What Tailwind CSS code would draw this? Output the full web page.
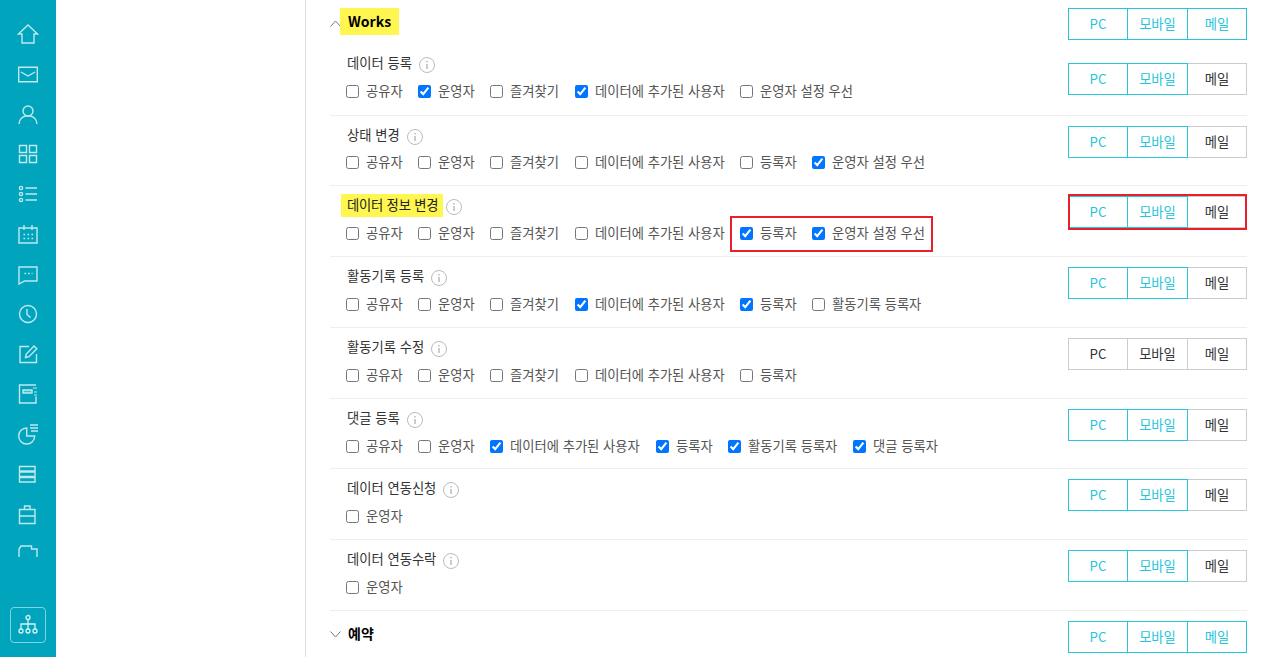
<!DOCTYPE html>
<html lang="ko">
<head>
<meta charset="utf-8">
<script src="https://cdn.jsdelivr.net/npm/@tailwindcss/browser@4"></script>
</head>
<body class="h-[657px] overflow-hidden bg-white font-['Noto_Sans_CJK_KR','Noto_Sans',sans-serif] text-[13.3px] text-[#555]">
<div class="flex h-[657px]">
  <aside class="flex w-[56px] shrink-0 flex-col items-center bg-[#00a5bd] pt-[22px] pb-[14px]">
    <nav class="flex h-[535px] flex-col items-center overflow-hidden text-[#bfe9ef]">
      <span class="block h-[40px] shrink-0"><svg width="24" height="24" viewBox="0 0 24 24" fill="none" stroke="currentColor" stroke-width="1.4"><path d="M2.500 12 12 3l9.500 9H18v9H6v-9z"/></svg></span>
      <span class="block h-[40px] shrink-0"><svg width="24" height="24" viewBox="0 0 24 24" fill="none" stroke="currentColor" stroke-width="1.4"><path d="M2.700 5.200h18.600v14.600H2.700zM5 10l7 4 7-4"/></svg></span>
      <span class="block h-[40px] shrink-0"><svg width="24" height="24" viewBox="0 0 24 24" fill="none" stroke="currentColor" stroke-width="1.4"><circle cx="12" cy="9" r="5"/><path d="M3 22c0-5 4-8.200 9-8.200s9 3.200 9 8.200"/></svg></span>
      <span class="block h-[40px] shrink-0"><svg width="24" height="24" viewBox="0 0 24 24" fill="none" stroke="currentColor" stroke-width="1.4"><path d="M3.500 3.500h7v7h-7zM13.500 3.500h7v7h-7zM3.500 13.500h7v7h-7zM13.500 13.500h7v7h-7z"/></svg></span>
      <span class="block h-[40px] shrink-0"><svg width="24" height="24" viewBox="0 0 24 24" fill="none" stroke="currentColor" stroke-width="1.4"><circle cx="5" cy="6" r="1.600"/><circle cx="5" cy="12" r="1.600"/><circle cx="5" cy="18" r="1.600"/><path d="M9.500 6H21M9.500 12H21M9.500 18H21"/></svg></span>
      <span class="block h-[40px] shrink-0"><svg width="24" height="24" viewBox="0 0 24 24" fill="none" stroke="currentColor" stroke-width="1.4"><path d="M3 6h18v15H3zM8 3v5M16 3v5"/><path stroke-width="1.600" stroke-dasharray="1.600 2.400" d="M7.500 12.500h10M7.500 16.500h10"/></svg></span>
      <span class="block h-[40px] shrink-0"><svg width="24" height="24" viewBox="0 0 24 24" fill="none" stroke="currentColor" stroke-width="1.4"><path d="M3 5h18v14H8.500L3 22z"/><path stroke-width="1.600" stroke-dasharray="1.600 2" d="M8.500 11.500h8"/></svg></span>
      <span class="block h-[40px] shrink-0"><svg width="24" height="24" viewBox="0 0 24 24" fill="none" stroke="currentColor" stroke-width="1.4"><circle cx="12" cy="12" r="8.500"/><path d="M11 7v5.500l3.500 3"/></svg></span>
      <span class="block h-[40px] shrink-0"><svg width="24" height="24" viewBox="0 0 24 24" fill="none" stroke="currentColor" stroke-width="1.4"><path d="M13 4.500H4v16h16.500V12M9.500 15.500l.8-3.500L18 4l2.800 2.700-7.800 8z"/></svg></span>
      <span class="block h-[40px] shrink-0"><svg width="24" height="24" viewBox="0 0 24 24" fill="none" stroke="currentColor" stroke-width="1.4"><path d="M20 3H3.500v18H20v-6.500"/><path d="M7 8h9v3H7z" fill="currentColor" fill-opacity=".35"/><path d="M17 6h4M18 10h3M18 13h3" stroke-width="1.200"/></svg></span>
      <span class="block h-[40px] shrink-0"><svg width="24" height="24" viewBox="0 0 24 24" fill="none" stroke="currentColor" stroke-width="1.4"><path d="M10.700 6A8 8 0 1 0 18.700 14H10.700z"/><path d="M14 3h8M14 6h8M15 9h7" stroke-width="1.500"/></svg></span>
      <span class="block h-[40px] shrink-0"><svg width="24" height="24" viewBox="0 0 24 24" fill="none" stroke="currentColor" stroke-width="1.4"><path d="M3.500 4.500h15.500v4.500H3.500zM3.500 10h15.500v4.500H3.500zM3.500 15.500h15.500v4.500H3.500z"/></svg></span>
      <span class="block h-[40px] shrink-0"><svg width="24" height="24" viewBox="0 0 24 24" fill="none" stroke="currentColor" stroke-width="1.4"><path d="M3.500 7.500h15.500v14H3.500zM3.500 14h15.500M8.500 7.500V4h5.500v3.500"/></svg></span>
      <span class="block h-[40px] shrink-0 -mt-[2px]"><svg width="24" height="24" viewBox="0 0 24 24" fill="none" stroke="currentColor" stroke-width="1.4"><path d="M3 17V9l2-3h10.500v3h5.500v8"/></svg></span>
    </nav>
    <button class="mt-auto flex h-[36px] w-[36px] items-center justify-center rounded-[4px] border border-[#7fd2de] text-[#d6f2f6]">
      <svg width="24" height="24" viewBox="0 0 24 24" fill="none" stroke="currentColor" stroke-width="1.3"><circle cx="12" cy="4.500" r="2"/><circle cx="5" cy="18" r="2"/><circle cx="12" cy="18" r="2"/><circle cx="19" cy="18" r="2"/><path d="M12 6.500V16M5 16v-5h14v5"/></svg>
    </button>
  </aside>
  <div class="w-[250px] shrink-0 border-r border-[#e0e0e0]"></div>
  <main class="ml-[24px] w-[917px] shrink-0">
    <section class="flex h-[53px] justify-between pt-[8px]">
      <div class="flex items-start">
        <svg class="mt-[12px]" width="11" height="7" viewBox="0 0 11 7" fill="none" stroke="#777"><path d="M.5 6.500 5.500 1l5 5.500"/></svg>
        <strong class="bg-[#fff750] px-[8px] h-[27px] ml-[-1px] text-[14px] leading-[27px] font-bold text-black">Works</strong>
      </div>
      <div class="flex h-[32px]"><span class="z-10 flex w-[60px] items-center justify-center border border-[#26c6da] text-[#26c6da]">PC</span><span class="z-10 -ml-px flex w-[61px] items-center justify-center border border-[#26c6da] text-[#26c6da]">모바일</span><span class="-ml-px flex w-[60px] items-center justify-center border border-[#26c6da] text-[#26c6da]">메일</span></div>
    </section>

    <section class="flex h-[63px] justify-between border-b border-[#eee] pt-[10px] pl-[17px]">
      <div class="-mt-[10px]">
        <div class="flex h-[20px] items-center text-[#333]">데이터 등록<svg class="ml-[7px] mt-[3px]" width="16" height="16" viewBox="0 0 16 16" fill="none" stroke="#bbb"><circle cx="8" cy="8" r="7.500"/><path d="M8 7v5M8 4v1.500" stroke="#999"/></svg></div>
        <div class="mt-[9px] flex h-[18px] items-center -ml-px">
          <label class="flex w-[72px] items-center gap-[7px]"><input type="checkbox">공유자</label>
          <label class="flex w-[72px] items-center gap-[7px]"><input type="checkbox" checked>운영자</label>
          <label class="flex w-[85px] items-center gap-[7px]"><input type="checkbox">즐겨찾기</label>
          <label class="flex w-[165px] items-center gap-[7px]"><input type="checkbox" checked>데이터에 추가된 사용자</label>
          <label class="flex items-center gap-[7px]"><input type="checkbox">운영자 설정 우선</label>
        </div>
      </div>
      <div class="flex h-[32px]"><span class="z-10 flex w-[60px] items-center justify-center border border-[#26c6da] text-[#26c6da]">PC</span><span class="z-10 -ml-px flex w-[61px] items-center justify-center border border-[#26c6da] text-[#26c6da]">모바일</span><span class="-ml-px flex w-[60px] items-center justify-center border border-[#ccc] text-[#333]">메일</span></div>
    </section>

    <section class="flex h-[70px] justify-between border-b border-[#eee] pt-[10px] pl-[17px]">
      <div class="-mt-px">
        <div class="flex h-[20px] items-center text-[#333]">상태 변경<svg class="ml-[7px] mt-[3px]" width="16" height="16" viewBox="0 0 16 16" fill="none" stroke="#bbb"><circle cx="8" cy="8" r="7.500"/><path d="M8 7v5M8 4v1.500" stroke="#999"/></svg></div>
        <div class="mt-[8px] flex h-[18px] items-center -ml-px">
          <label class="flex w-[72px] items-center gap-[7px]"><input type="checkbox">공유자</label>
          <label class="flex w-[72px] items-center gap-[7px]"><input type="checkbox">운영자</label>
          <label class="flex w-[85px] items-center gap-[7px]"><input type="checkbox">즐겨찾기</label>
          <label class="flex w-[165px] items-center gap-[7px]"><input type="checkbox">데이터에 추가된 사용자</label>
          <label class="flex w-[72px] items-center gap-[7px]"><input type="checkbox">등록자</label>
          <label class="flex items-center gap-[7px]"><input type="checkbox" checked>운영자 설정 우선</label>
        </div>
      </div>
      <div class="flex h-[32px]"><span class="z-10 flex w-[60px] items-center justify-center border border-[#26c6da] text-[#26c6da]">PC</span><span class="z-10 -ml-px flex w-[61px] items-center justify-center border border-[#26c6da] text-[#26c6da]">모바일</span><span class="-ml-px flex w-[60px] items-center justify-center border border-[#ccc] text-[#333]">메일</span></div>
    </section>

    <section class="flex h-[71px] justify-between border-b border-[#eee] pt-[10px] pl-[17px]">
      <div class="-mt-px">
        <div class="flex h-[20px] items-center text-[#333]"><span class="-ml-[6px] flex h-[23px] items-center bg-[#fff750] pl-[6px] pr-[5px] tracking-[-0.2px] text-[#222]">데이터 정보 변경</span><svg class="ml-[3px] mt-[3px]" width="16" height="16" viewBox="0 0 16 16" fill="none" stroke="#bbb"><circle cx="8" cy="8" r="7.500"/><path d="M8 7v5M8 4v1.500" stroke="#999"/></svg></div>
        <div class="mt-[9px] flex h-[18px] items-center -ml-px">
          <label class="flex w-[72px] items-center gap-[7px]"><input type="checkbox">공유자</label>
          <label class="flex w-[72px] items-center gap-[7px]"><input type="checkbox">운영자</label>
          <label class="flex w-[85px] items-center gap-[7px]"><input type="checkbox">즐겨찾기</label>
          <label class="flex w-[165px] items-center gap-[7px]"><input type="checkbox">데이터에 추가된 사용자</label>
          <div class="relative flex items-center">
            <span class="absolute -left-[10px] -right-[8px] -top-[7px] -bottom-[9px] border-2 border-[#e8202a]"></span>
            <label class="flex w-[72px] items-center gap-[7px]"><input type="checkbox" checked>등록자</label>
            <label class="flex items-center gap-[7px]"><input type="checkbox" checked>운영자 설정 우선</label>
          </div>
        </div>
      </div>
      <div class="relative flex h-[32px]"><span class="z-10 flex w-[60px] items-center justify-center border border-[#26c6da] text-[#26c6da]">PC</span><span class="z-10 -ml-px flex w-[61px] items-center justify-center border border-[#26c6da] text-[#26c6da]">모바일</span><span class="-ml-px flex w-[60px] items-center justify-center border border-[#ccc] text-[#333]">메일</span><span class="absolute -inset-y-[2px] inset-x-0 z-20 border-2 border-[#e8202a]"></span></div>
    </section>

    <section class="flex h-[71px] justify-between border-b border-[#eee] pt-[10px] pl-[17px]">
      <div class="-mt-px">
        <div class="flex h-[20px] items-center text-[#333]">활동기록 등록<svg class="ml-[7px] mt-[3px]" width="16" height="16" viewBox="0 0 16 16" fill="none" stroke="#bbb"><circle cx="8" cy="8" r="7.500"/><path d="M8 7v5M8 4v1.500" stroke="#999"/></svg></div>
        <div class="mt-[9px] flex h-[18px] items-center -ml-px">
          <label class="flex w-[72px] items-center gap-[7px]"><input type="checkbox">공유자</label>
          <label class="flex w-[72px] items-center gap-[7px]"><input type="checkbox">운영자</label>
          <label class="flex w-[85px] items-center gap-[7px]"><input type="checkbox">즐겨찾기</label>
          <label class="flex w-[165px] items-center gap-[7px]"><input type="checkbox" checked>데이터에 추가된 사용자</label>
          <label class="flex w-[72px] items-center gap-[7px]"><input type="checkbox" checked>등록자</label>
          <label class="flex items-center gap-[7px]"><input type="checkbox">활동기록 등록자</label>
        </div>
      </div>
      <div class="flex h-[32px]"><span class="z-10 flex w-[60px] items-center justify-center border border-[#26c6da] text-[#26c6da]">PC</span><span class="z-10 -ml-px flex w-[61px] items-center justify-center border border-[#26c6da] text-[#26c6da]">모바일</span><span class="-ml-px flex w-[60px] items-center justify-center border border-[#ccc] text-[#333]">메일</span></div>
    </section>

    <section class="flex h-[71px] justify-between border-b border-[#eee] pt-[10px] pl-[17px]">
      <div class="-mt-px">
        <div class="flex h-[20px] items-center text-[#333]">활동기록 수정<svg class="ml-[7px] mt-[3px]" width="16" height="16" viewBox="0 0 16 16" fill="none" stroke="#bbb"><circle cx="8" cy="8" r="7.500"/><path d="M8 7v5M8 4v1.500" stroke="#999"/></svg></div>
        <div class="mt-[9px] flex h-[18px] items-center -ml-px">
          <label class="flex w-[72px] items-center gap-[7px]"><input type="checkbox">공유자</label>
          <label class="flex w-[72px] items-center gap-[7px]"><input type="checkbox">운영자</label>
          <label class="flex w-[85px] items-center gap-[7px]"><input type="checkbox">즐겨찾기</label>
          <label class="flex w-[165px] items-center gap-[7px]"><input type="checkbox">데이터에 추가된 사용자</label>
          <label class="flex items-center gap-[7px]"><input type="checkbox">등록자</label>
        </div>
      </div>
      <div class="flex h-[32px]"><span class="flex w-[60px] items-center justify-center border border-[#ccc] text-[#333]">PC</span><span class="-ml-px flex w-[61px] items-center justify-center border border-[#ccc] text-[#333]">모바일</span><span class="-ml-px flex w-[60px] items-center justify-center border border-[#ccc] text-[#333]">메일</span></div>
    </section>

    <section class="flex h-[70px] justify-between border-b border-[#eee] pt-[10px] pl-[17px]">
      <div class="-mt-px">
        <div class="flex h-[20px] items-center text-[#333]">댓글 등록<svg class="ml-[7px] mt-[3px]" width="16" height="16" viewBox="0 0 16 16" fill="none" stroke="#bbb"><circle cx="8" cy="8" r="7.500"/><path d="M8 7v5M8 4v1.500" stroke="#999"/></svg></div>
        <div class="mt-[9px] flex h-[18px] items-center -ml-px">
          <label class="flex w-[72px] items-center gap-[7px]"><input type="checkbox">공유자</label>
          <label class="flex w-[72px] items-center gap-[7px]"><input type="checkbox">운영자</label>
          <label class="flex w-[166px] items-center gap-[7px]"><input type="checkbox" checked>데이터에 추가된 사용자</label>
          <label class="flex w-[72px] items-center gap-[7px]"><input type="checkbox" checked>등록자</label>
          <label class="flex w-[125px] items-center gap-[7px]"><input type="checkbox" checked>활동기록 등록자</label>
          <label class="flex items-center gap-[7px]"><input type="checkbox" checked>댓글 등록자</label>
        </div>
      </div>
      <div class="flex h-[32px]"><span class="z-10 flex w-[60px] items-center justify-center border border-[#26c6da] text-[#26c6da]">PC</span><span class="z-10 -ml-px flex w-[61px] items-center justify-center border border-[#26c6da] text-[#26c6da]">모바일</span><span class="-ml-px flex w-[60px] items-center justify-center border border-[#ccc] text-[#333]">메일</span></div>
    </section>

    <section class="flex h-[71px] justify-between border-b border-[#eee] pt-[10px] pl-[17px]">
      <div class="-mt-px">
        <div class="flex h-[20px] items-center text-[#333]">데이터 연동신청<svg class="ml-[7px] mt-[3px]" width="16" height="16" viewBox="0 0 16 16" fill="none" stroke="#bbb"><circle cx="8" cy="8" r="7.500"/><path d="M8 7v5M8 4v1.500" stroke="#999"/></svg></div>
        <div class="mt-[9px] flex h-[18px] items-center -ml-px">
          <label class="flex items-center gap-[7px]"><input type="checkbox">운영자</label>
        </div>
      </div>
      <div class="flex h-[32px]"><span class="z-10 flex w-[60px] items-center justify-center border border-[#26c6da] text-[#26c6da]">PC</span><span class="z-10 -ml-px flex w-[61px] items-center justify-center border border-[#26c6da] text-[#26c6da]">모바일</span><span class="-ml-px flex w-[60px] items-center justify-center border border-[#ccc] text-[#333]">메일</span></div>
    </section>

    <section class="flex h-[71px] justify-between border-b border-[#eee] pt-[10px] pl-[17px]">
      <div class="-mt-px">
        <div class="flex h-[20px] items-center text-[#333]">데이터 연동수락<svg class="ml-[7px] mt-[3px]" width="16" height="16" viewBox="0 0 16 16" fill="none" stroke="#bbb"><circle cx="8" cy="8" r="7.500"/><path d="M8 7v5M8 4v1.500" stroke="#999"/></svg></div>
        <div class="mt-[9px] flex h-[18px] items-center -ml-px">
          <label class="flex items-center gap-[7px]"><input type="checkbox">운영자</label>
        </div>
      </div>
      <div class="flex h-[32px]"><span class="z-10 flex w-[60px] items-center justify-center border border-[#26c6da] text-[#26c6da]">PC</span><span class="z-10 -ml-px flex w-[61px] items-center justify-center border border-[#26c6da] text-[#26c6da]">모바일</span><span class="-ml-px flex w-[60px] items-center justify-center border border-[#ccc] text-[#333]">메일</span></div>
    </section>

    <section class="flex justify-between pt-[10px]">
      <div class="flex items-start">
        <svg class="mt-[10px]" width="11" height="7" viewBox="0 0 11 7" fill="none" stroke="#777"><path d="M.5.500 5.500 6l5-5.500"/></svg>
        <strong class="ml-[7px] mt-[2px] text-[14px] font-bold text-black">예약</strong>
      </div>
      <div class="flex h-[32px]"><span class="z-10 flex w-[60px] items-center justify-center border border-[#26c6da] text-[#26c6da]">PC</span><span class="z-10 -ml-px flex w-[61px] items-center justify-center border border-[#26c6da] text-[#26c6da]">모바일</span><span class="-ml-px flex w-[60px] items-center justify-center border border-[#26c6da] text-[#26c6da]">메일</span></div>
    </section>
  </main>
</div>
</body>
</html>
